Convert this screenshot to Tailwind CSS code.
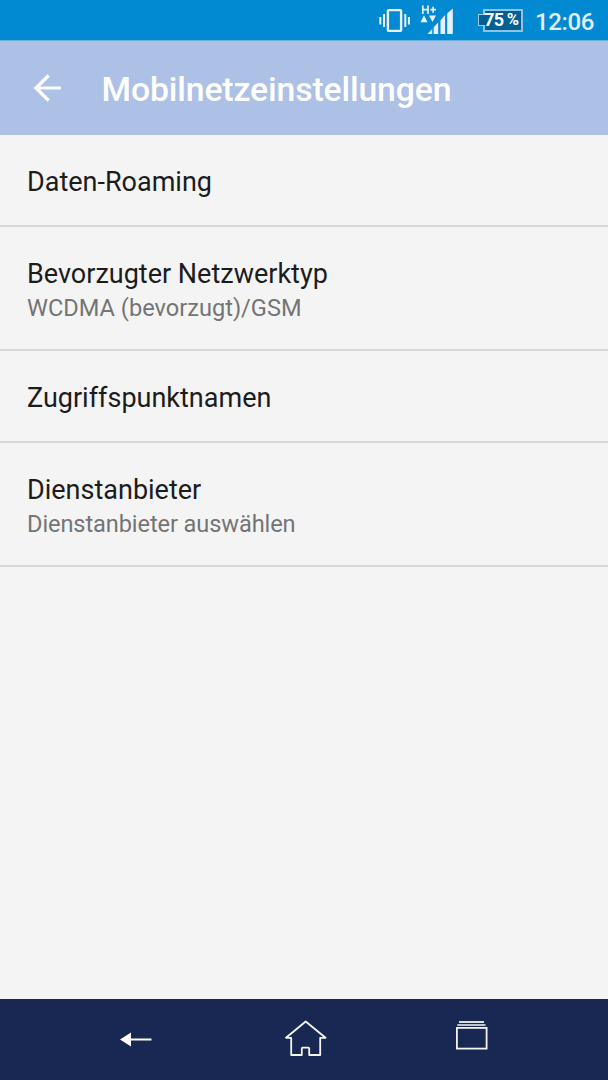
<!DOCTYPE html>
<html lang="de">
<head>
<meta charset="utf-8">
<title>Mobilnetzeinstellungen</title>
<script src="https://cdn.jsdelivr.net/npm/@tailwindcss/browser@4"></script>
</head>
<body class="flex h-[1080px] w-[608px] flex-col overflow-hidden bg-[#f4f4f4] font-['Roboto',sans-serif]">
  <div class="flex h-10 shrink-0 items-center bg-[#0189d1] pl-[378px] text-white">
    <svg class="h-10 w-[33px] shrink-0" viewBox="378 0 33 40" fill="none" stroke="#e8f1f9">
      <rect x="387.900" y="10.100" width="13.200" height="20.800" rx="1" stroke-width="2.400"/>
      <path d="M384 14v13M405.300 14v13M380.300 17v7.500M408.900 17v7.500" stroke-width="2"/>
    </svg>
    <svg class="ml-[9px] h-10 w-[34px] shrink-0" viewBox="420 0 34 40" fill="#e8f1f9">
      <path d="M422.800 5.500v8.500M428 5.500v8.500M422.800 9.700H428M430.300 9.700h5.700M433.100 6.700v6" fill="none" stroke="#e8f1f9" stroke-width="1.700"/>
      <path d="M420.500 22.300h7l-3.500-7zM429 15.500h7l-3.500 6.500z"/>
      <path d="M427.500 34l4.700-5V34zM433.700 34V27.300l4.500-4.700V34zM440.500 34V20.300l4.600-5.300V34zM447.200 34V13.500L452.800 8.500V34z"/>
    </svg>
    <div class="ml-6 flex shrink-0 items-center">
      <div class="z-10 -mr-[2px] h-[12px] w-[7px] border border-r-0 border-[#9fcbe8] bg-[#045f94]"></div>
      <div class="flex h-[23px] w-10 items-center border-2 border-[#8fc3e5] bg-[#045f94] text-[18px] leading-none font-bold whitespace-nowrap"><span class="z-20 -ml-px tracking-[-0.5px]">75</span><span class="z-20 ml-[3px] text-[16.500px]">%</span></div>
    </div>
    <span class="mt-[3px] ml-[12px] text-[24px] leading-none font-medium tracking-[-0.350px] text-[#e2effa]">12:06</span>
  </div>
  <header class="flex h-[95px] shrink-0 items-center border-t border-[#6cb0e0] bg-[#adc1e7] text-white">
    <svg class="ml-[33px] h-7 w-7 shrink-0" viewBox="0 0 28 28" fill="none" stroke="currentColor" stroke-width="3.2">
      <path d="M28 14H3M15.600 1.500L3 14L15.600 26.500"/>
    </svg>
    <h1 class="mt-[3px] ml-[40.500px] text-[33.750px] leading-none font-medium tracking-[-0.120px]">Mobilnetzeinstellungen</h1>
  </header>
  <main class="flex-1 text-[27px] leading-8 text-[#1c1c1d]">
    <div class="h-[92px] border-b-2 border-[#d7d7d7] px-[27px] pt-[31px]">Daten-Roaming</div>
    <div class="h-[124px] border-b-2 border-[#d7d7d7] px-[27px] pt-[31px]">
      <div>Bevorzugter Netzwerktyp</div>
      <div class="mt-[4px] text-[23.600px] leading-7 text-[#747475]">WCDMA (bevorzugt)/GSM</div>
    </div>
    <div class="h-[92px] border-b-2 border-[#d7d7d7] px-[27px] pt-[31px]">Zugriffspunktnamen</div>
    <div class="h-[124px] border-b-2 border-[#d7d7d7] px-[27px] pt-[31px]">
      <div>Dienstanbieter</div>
      <div class="mt-[4px] text-[23.600px] leading-7 tracking-[-0.100px] text-[#747475]">Dienstanbieter auswählen</div>
    </div>
  </main>
  <nav class="flex h-[81px] shrink-0 bg-[#192853] pl-[119px] text-white">
    <svg class="mt-[32px] h-4 w-[34px]" viewBox="0 0 34 16">
      <path d="M1 8.500L12 1.500V15.500z" fill="currentColor"/>
      <path d="M11 8.500H32.500" stroke="currentColor" stroke-width="2"/>
    </svg>
    <svg class="mt-[20px] ml-[131px] h-[38px] w-[44px]" viewBox="284 1019 44 38" fill="none" stroke="#f5f5f0" stroke-width="1.8" stroke-linejoin="round">
      <path d="M305.700 1021.500L286 1037.800H291.200V1055H301.800V1048.500Q301.800 1047.600 302.700 1047.600H308.300Q309.200 1047.600 309.200 1048.500V1055H320.200V1037.800H325.500Z"/>
    </svg>
    <svg class="mt-[20px] ml-[126px] h-[32px] w-[36px]" viewBox="454 1019 36 32" fill="none" stroke="#f3f3ee" stroke-width="1.8">
      <path d="M459 1022H484"/>
      <path d="M457.300 1025H485.500" stroke="#bcc3d2" stroke-width="2"/>
      <rect x="456.900" y="1027.900" width="29.700" height="20.700"/>
    </svg>
  </nav>
</body>
</html>
